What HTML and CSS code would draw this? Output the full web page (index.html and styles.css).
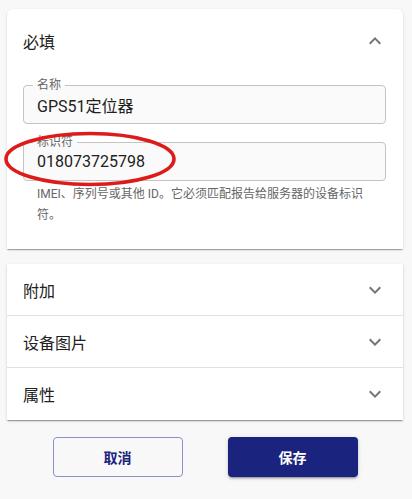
FILE: index.html
```html
<!DOCTYPE html>
<html lang="zh">
<head>
<meta charset="utf-8">
<link rel="stylesheet" href="styles.css">
</head>
<body>
<div class="page">
  <section class="card">
    <div class="panel-header">
      <span class="panel-title">必填</span>
      <svg class="chev" viewBox="0 0 24 24" width="24" height="24"><path d="M7.41 15.41 12 10.83l4.59 4.58L18 14l-6-6-6 6z"/></svg>
    </div>
    <div class="panel-body">
      <div class="field">
        <span class="field-label">名称</span>
        <span class="field-value">GPS51定位器</span>
      </div>
      <div class="field field-second">
        <span class="field-label">标识符</span>
        <span class="field-value">018073725798</span>
      </div>
      <p class="helper">IMEI、序列号或其他 ID。它必须匹配报告给服务器的设备标识符。</p>
      <svg class="annot" width="176" height="58" viewBox="0 0 176 58"><ellipse cx="88" cy="29" rx="84" ry="25.5" fill="none" stroke="#dd1b1b" stroke-width="3.6"/></svg>
    </div>
  </section>

  <section class="card card-list">
    <div class="row"><span class="panel-title">附加</span><svg class="chev" viewBox="0 0 24 24" width="24" height="24"><path d="M16.59 8.59 12 13.17 7.41 8.59 6 10l6 6 6-6z"/></svg></div>
    <div class="row"><span class="panel-title">设备图片</span><svg class="chev" viewBox="0 0 24 24" width="24" height="24"><path d="M16.59 8.59 12 13.17 7.41 8.59 6 10l6 6 6-6z"/></svg></div>
    <div class="row"><span class="panel-title">属性</span><svg class="chev" viewBox="0 0 24 24" width="24" height="24"><path d="M16.59 8.59 12 13.17 7.41 8.59 6 10l6 6 6-6z"/></svg></div>
  </section>

  <div class="actions">
    <button class="btn btn-outline">取消</button>
    <button class="btn btn-primary">保存</button>
  </div>
</div>
</body>
</html>
```

FILE: styles.css
```css
* { box-sizing: border-box; }
html, body { margin: 0; padding: 0; }
body {
  background: #f8f8f8;
  font-family: Roboto, "Noto Sans CJK SC", sans-serif;
  color: #212121;
  width: 412px;
  height: 499px;
  overflow: hidden;
}
.page {
  padding: 9px 9px 0 7px;
}
.card {
  background: #fff;
  border-radius: 6px 6px 0 0;
  box-shadow: 0 2px 1px -1px rgba(0,0,0,.2), 0 1px 1px 0 rgba(0,0,0,.14), 0 1px 3px 0 rgba(0,0,0,.12);
}
.panel-header {
  height: 64px;
  padding: 0 16px;
  display: flex;
  align-items: center;
  justify-content: space-between;
}
.panel-title {
  font-size: 16px;
  color: #212121;
}
.chev { fill: #757575; }
.panel-body {
  position: relative;
  padding: 12px 17px 23px 16px;
}
.field {
  position: relative;
  height: 39px;
  border: 1px solid #c4c4c4;
  border-radius: 4px;
  background: #fafafa;
  display: flex;
  align-items: center;
  padding: 0 13px;
}
.field-second { margin-top: 18px; }
.field-label {
  position: absolute;
  top: -9px;
  left: 9px;
  padding: 0 4px;
  font-size: 12px;
  line-height: 16px;
  color: #666;
  background: linear-gradient(#fff 50%, #fafafa 50%);
}
.field-value {
  font-size: 16px;
  color: #212121;
}
.helper {
  margin: 3px 0 0;
  padding: 0 22px 0 14px;
  font-size: 12px;
  line-height: 21px;
  color: #666;
}
.annot {
  position: absolute;
  left: -5px;
  top: 57px;
}
.card-list {
  margin-top: 15px;
  border-radius: 0;
}
.row {
  height: 52px;
  padding: 0 16px;
  display: flex;
  align-items: center;
  justify-content: space-between;
  border-bottom: 1px solid #e0e0e0;
}
.row:last-child { border-bottom: none; }
.actions {
  display: flex;
  justify-content: center;
  gap: 45px;
  margin-top: 17px;
}
.btn {
  width: 130px;
  height: 40px;
  border-radius: 4px;
  font-family: Roboto, "Noto Sans CJK SC", sans-serif;
  font-size: 14px;
  font-weight: 700;
}
.btn-outline {
  background: transparent;
  color: #1a237e;
  border: 1px solid #8a90c8;
}
.btn-primary {
  background: #1a237e;
  color: #fff;
  border: none;
  box-shadow: 0 3px 1px -2px rgba(0,0,0,.2), 0 2px 2px 0 rgba(0,0,0,.14), 0 1px 5px 0 rgba(0,0,0,.12);
}
```
